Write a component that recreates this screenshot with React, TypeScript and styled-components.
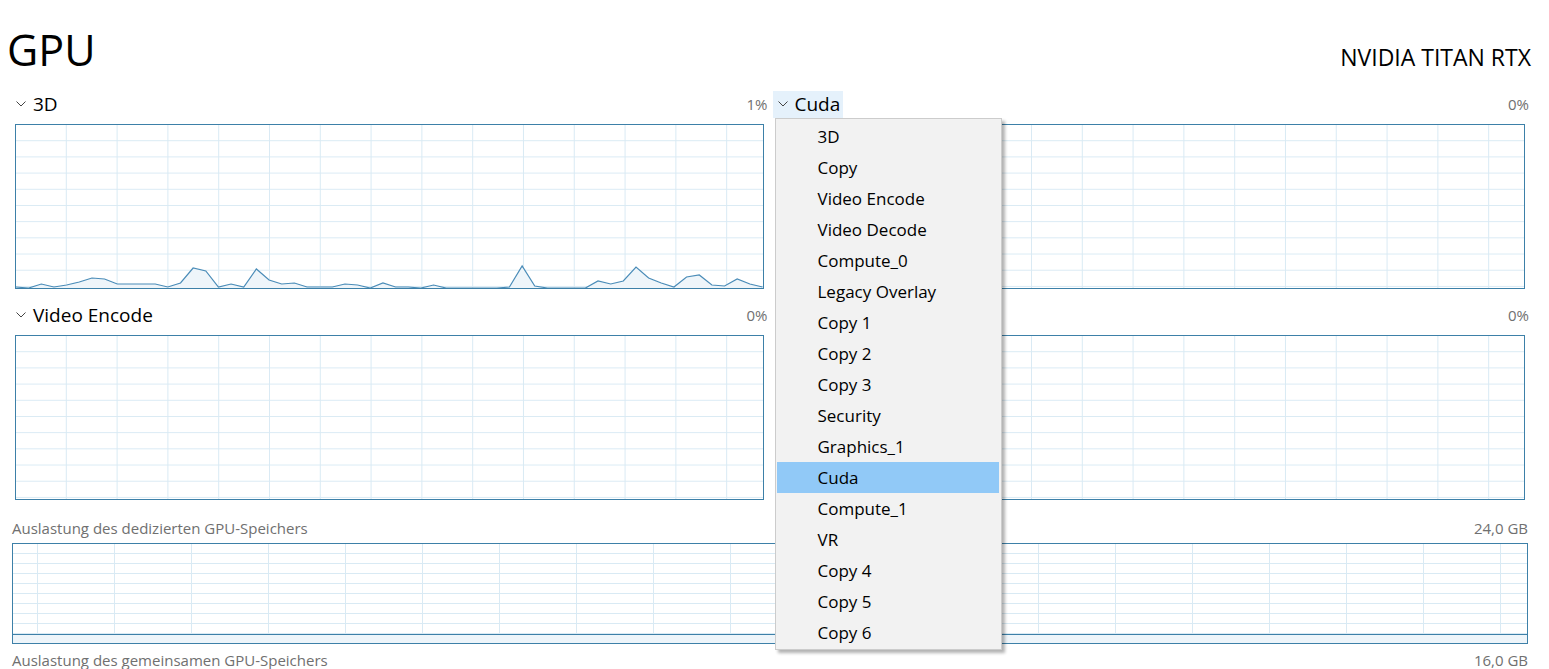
import React from 'react';
import styled, { createGlobalStyle } from 'styled-components';

const GlobalStyle = createGlobalStyle`
  html, body {
    margin: 0;
    padding: 0;
    background: #ffffff;
    font-family: 'Open Sans', 'Noto Sans', sans-serif;
    overflow: hidden;
  }
`;

const LINE = '#3d80a8';
const GRID = '#d9eaf4';
const FILL = '#eef5fa';

const Page = styled.div`
  width: 1549px;
  height: 669px;
  box-sizing: border-box;
  padding: 20px 21px 0 12px;
  display: flex;
  flex-direction: column;
  overflow: hidden;

  & > * {
    flex-shrink: 0;
  }
`;

const TitleRow = styled.div`
  display: flex;
  align-items: baseline;
  justify-content: space-between;
  height: 68px;
`;

const Title = styled.h1`
  margin: 0 0 0 -5px;
  font-size: 43px;
  font-weight: 400;
  color: #000;
`;

const DeviceName = styled.div`
  margin-right: -3px;
  font-size: 23px;
  color: #000;
`;

const EngineGrid = styled.div`
  display: grid;
  grid-template-columns: 1fr 1fr;
  column-gap: 13px;
  row-gap: 10px;
  padding: 0 3px;
`;

const EngineBlock = styled.div`
  position: relative;
  display: flex;
  flex-direction: column;
`;

const EngineHeader = styled.div`
  display: flex;
  align-items: center;
  justify-content: space-between;
  height: 32px;
  margin-bottom: 4px;
`;

const EngineToggle = styled.div<{ $open?: boolean }>`
  display: inline-flex;
  align-items: center;
  gap: 7px;
  height: 27px;
  padding: 0 3px 0 ${p => (p.$open ? '5px' : '2px')};
  margin-left: ${p => (p.$open ? '-4px' : '-1px')};
  background: ${p => (p.$open ? '#e5f1fb' : 'transparent')};
  font-size: 19px;
  color: #000;
`;

const Percent = styled.span`
  margin-right: -4px;
  font-size: 15px;
  color: #707070;
`;

const ChartBox = styled.div<{ $h: number; $cellW: number; $cellH: number; $offX: number }>`
  position: relative;
  flex-shrink: 0;
  height: ${p => p.$h}px;
  border: 1px solid ${LINE};
  background-color: #fff;
  background-image: linear-gradient(to right, transparent calc(100% - 1px), ${GRID} calc(100% - 1px)),
    linear-gradient(to bottom, transparent calc(100% - 1px), ${GRID} calc(100% - 1px));
  background-size: ${p => p.$cellW}px 100%, 100% ${p => p.$cellH}px;
  background-position: ${p => p.$offX}px 0, 0 0;
  display: flex;
  flex-direction: column;
  justify-content: flex-end;
`;

const Plot = styled.svg`
  display: block;
  width: 100%;
  height: 100%;
`;

const MemoryFill = styled.div`
  height: 8px;
  border-top: 1px solid ${LINE};
  background: ${FILL};
`;

const MemoryLabelRow = styled.div<{ $top: number }>`
  display: flex;
  justify-content: space-between;
  margin-top: ${p => p.$top}px;
  margin-bottom: 5px;
  font-size: 15px;
  line-height: 20px;
  color: #707070;
`;

const Menu = styled.div`
  position: absolute;
  top: 30px;
  left: -2px;
  width: 222px;
  padding: 2px 2px 1px 1px;
  background: #f2f2f2;
  border: 1px solid #cccccc;
  box-shadow: 3px 3px 3px rgba(0, 0, 0, 0.3);
  z-index: 10;
`;

const MenuItem = styled.div<{ $selected?: boolean }>`
  height: 31px;
  line-height: 31px;
  padding-left: 41px;
  font-size: 17px;
  color: #000;
  background: ${p => (p.$selected ? '#91c9f7' : 'transparent')};
`;

const Chevron = () => (
  <svg width="10" height="6" viewBox="0 0 10 6">
    <path d="M0.5 0.5 L5 5 L9.5 0.5" fill="none" stroke="#444" strokeWidth="1" />
  </svg>
);

const load3d = [
  1, 0, 4, 1, 3, 6, 10, 9, 4, 4, 4, 4, 1, 5, 20, 17, 1, 4, 1, 19, 8, 4, 5, 1, 1, 1, 4, 3, 0, 5, 1, 1, 0, 3, 0,
  0, 0, 0, 0, 1, 22, 2, 0, 0, 0, 0, 7, 4, 7, 21, 10, 5, 1, 11, 13, 3, 2, 9, 4, 1,
];

const LoadChart = ({ values }: { values: number[] }) => {
  const w = 746;
  const h = 163;
  const step = w / (values.length - 1);
  const pts = values.map((v, i) => `${(i * step).toFixed(1)},${(h - v).toFixed(1)}`);
  return (
    <Plot viewBox={`0 0 ${w} ${h}`} preserveAspectRatio="none">
      <polygon points={`0,${h} ${pts.join(' ')} ${w},${h}`} fill={FILL} />
      <polyline points={pts.join(' ')} fill="none" stroke="#4a8cb8" strokeWidth="1.2" />
    </Plot>
  );
};

const engines = [
  '3D',
  'Copy',
  'Video Encode',
  'Video Decode',
  'Compute_0',
  'Legacy Overlay',
  'Copy 1',
  'Copy 2',
  'Copy 3',
  'Security',
  'Graphics_1',
  'Cuda',
  'Compute_1',
  'VR',
  'Copy 4',
  'Copy 5',
  'Copy 6',
];

const EngineChart = ({ children }: { children?: React.ReactNode }) => (
  <ChartBox $h={163} $cellW={50.8} $cellH={16.2} $offX={0}>
    {children}
  </ChartBox>
);

const App = () => (
  <>
    <GlobalStyle />
    <Page>
      <TitleRow>
        <Title>GPU</Title>
        <DeviceName>NVIDIA TITAN RTX</DeviceName>
      </TitleRow>

      <EngineGrid>
        <EngineBlock>
          <EngineHeader>
            <EngineToggle>
              <Chevron />
              3D
            </EngineToggle>
            <Percent>1%</Percent>
          </EngineHeader>
          <EngineChart>
            <LoadChart values={load3d} />
          </EngineChart>
        </EngineBlock>

        <EngineBlock>
          <EngineHeader>
            <EngineToggle $open>
              <Chevron />
              Cuda
            </EngineToggle>
            <Percent>0%</Percent>
          </EngineHeader>
          <EngineChart />
          <Menu>
            {engines.map(name => (
              <MenuItem key={name} $selected={name === 'Cuda'}>
                {name}
              </MenuItem>
            ))}
          </Menu>
        </EngineBlock>

        <EngineBlock>
          <EngineHeader>
            <EngineToggle>
              <Chevron />
              Video Encode
            </EngineToggle>
            <Percent>0%</Percent>
          </EngineHeader>
          <EngineChart />
        </EngineBlock>

        <EngineBlock>
          <EngineHeader>
            <span />
            <Percent>0%</Percent>
          </EngineHeader>
          <EngineChart />
        </EngineBlock>
      </EngineGrid>

      <MemoryLabelRow $top={18}>
        <span>Auslastung des dedizierten GPU-Speichers</span>
        <span>24,0 GB</span>
      </MemoryLabelRow>
      <ChartBox $h={99} $cellW={77} $cellH={10} $offX={25}>
        <MemoryFill />
      </ChartBox>
      <MemoryLabelRow $top={6}>
        <span>Auslastung des gemeinsamen GPU-Speichers</span>
        <span>16,0 GB</span>
      </MemoryLabelRow>
    </Page>
  </>
);

export default App;
